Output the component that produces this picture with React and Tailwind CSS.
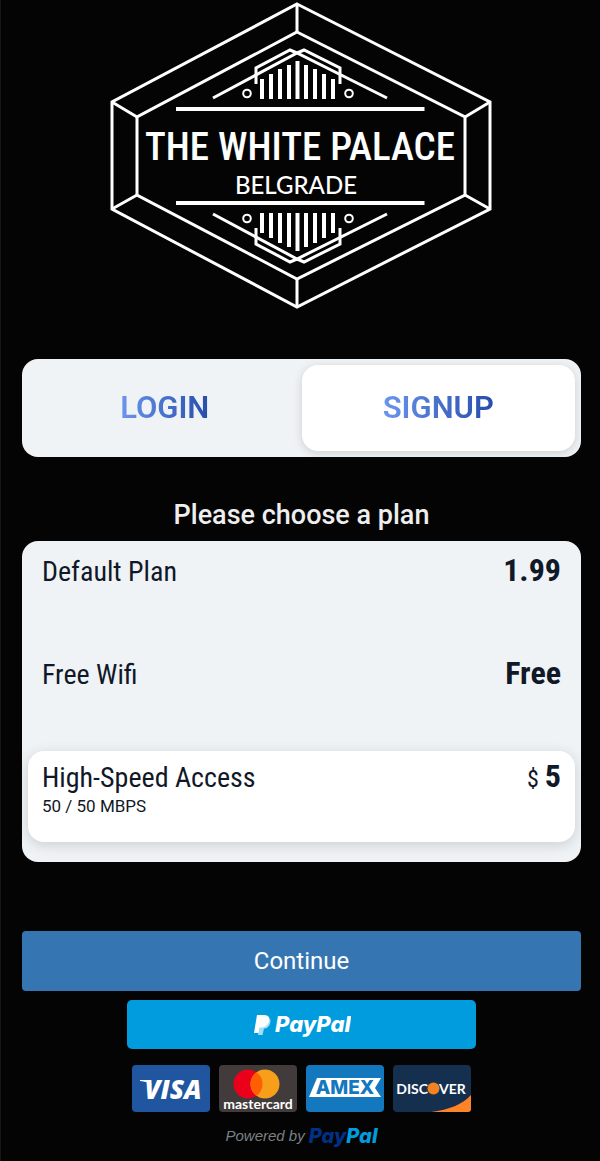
import React, { useState } from "react";

const plans = [
	{ id: "default", name: "Default Plan", price: "1.99" },
	{ id: "free", name: "Free Wifi", price: "Free" },
	{
		id: "high-speed",
		name: "High-Speed Access",
		speed: "50 / 50 MBPS",
		currency: "$",
		price: "5",
	},
];

// half of the crest ornament, mirrored for the bottom
function Ornament() {
	return (
		<>
			<path d="M176 109H424.500" strokeWidth="4" />
			<path d="M213 98L297 53L387 98" />
			<path d="M256 84V68L290 50L297 53M340 84V68L304 50L297 53" />
			<path d="M262 99V79M271 99V74M280 99V69M289 99V65M297.500 99V61M306 99V65M315 99V69M324 99V74M333 99V79" strokeWidth="4" />
			<circle cx="247" cy="93.500" r="3.800" strokeWidth="2" />
			<circle cx="349" cy="93.500" r="3.800" strokeWidth="2" />
		</>
	);
}

function Crest() {
	return (
		<svg
			viewBox="110 0 384 311"
			className="w-full max-w-[384px]"
			role="img"
			aria-label="The White Palace Belgrade"
		>
			<g fill="none" stroke="#fff" strokeWidth="3" strokeLinejoin="miter">
				<path d="M297 4L490 102V209L297 307L112 209V102Z" />
				<path d="M297 32L465 117V195L297 279L137 195V117Z" />
				<path d="M297 4V32M490 102L465 117M490 209L465 195M297 307V279M112 209L137 195M112 102L137 117" />
				<Ornament />
				<g transform="matrix(1 0 0 -1 0 312)">
					<Ornament />
				</g>
			</g>
			<g fill="#fff" textAnchor="middle">
				<text
					x="300"
					y="160"
					fontSize="39"
					className="font-['Roboto_Condensed','Liberation_Sans_Narrow',sans-serif] font-medium"
				>
					THE WHITE PALACE
				</text>
				<text x="296" y="194" fontSize="24" className="font-[Lato,sans-serif] font-medium">
					BELGRADE
				</text>
			</g>
		</svg>
	);
}

function Tab({ active, onClick, children }) {
	return (
		<button
			type="button"
			onClick={onClick}
			className={
				active
					? "flex-1 rounded-2xl bg-white shadow-[0_2px_10px_rgba(0,0,0,0.15)]"
					: "flex-1 rounded-2xl"
			}
		>
			<span className="bg-linear-to-r from-[#6b95ee] to-[#274dab] bg-clip-text text-[31px] font-semibold text-transparent">
				{children}
			</span>
		</button>
	);
}

function Plan({ plan, selected, onSelect }) {
	return (
		<label
			className={
				selected
					? "flex h-[91px] cursor-pointer justify-between rounded-2xl bg-white px-3.5 pt-[9px] shadow-[0_3px_14px_rgba(0,0,0,0.15)]"
					: "flex h-[91px] cursor-pointer justify-between rounded-2xl px-3.5 pt-[9px]"
			}
		>
			<input
				type="radio"
				name="plan"
				checked={selected}
				onChange={onSelect}
				className="sr-only"
			/>
			<span>
				<span className="block font-['Roboto_Condensed','Liberation_Sans_Narrow',sans-serif] text-[28px] leading-9">
					{plan.name}
				</span>
				{plan.speed && <span className="block text-[17px] leading-5">{plan.speed}</span>}
			</span>
			<span className="font-['Roboto_Condensed','Liberation_Sans_Narrow',sans-serif] text-[32px] leading-8 font-bold">
				{plan.currency && <span className="mr-1.5 text-2xl leading-8 font-normal">{plan.currency}</span>}
				{plan.price}
			</span>
		</label>
	);
}

function PayPalMark() {
	return (
		<svg viewBox="0 0 98 28" className="h-7 w-[98px]" role="img" aria-label="PayPal">
			<path d="M4 4H11C15.500 4 17.500 7 16.500 11C15.500 15 12.500 17 9 17H7L6 22H1Z" fill="#fff" />
			<path d="M16.800 7.500C18 9 17.500 12 16.500 14C15 17 12.500 17.500 11 17.500L9.500 24H5L6.500 16.500H9C13 16 16 13 16.800 7.500Z" fill="#a5ddf7" />
			<text x="22" y="21" fontSize="22" className="fill-white font-[Inter,sans-serif] font-extrabold italic">
				PayPal
			</text>
		</svg>
	);
}

function Visa() {
	return (
		<svg viewBox="0 0 78 47" className="w-[78px]" role="img" aria-label="Visa">
			<rect width="78" height="47" rx="4" fill="#20569f" />
			<path d="M8 15H17L20 20C17 17.500 13 16.500 8 16Z" fill="#fff" />
			<text x="41" y="34" fontSize="26" textAnchor="middle" className="fill-white font-['Open_Sans',sans-serif] font-extrabold italic">
				VISA
			</text>
		</svg>
	);
}

function Mastercard() {
	return (
		<svg viewBox="0 0 78 47" className="w-[78px]" role="img" aria-label="Mastercard">
			<rect width="78" height="47" rx="4" fill="#413b3b" />
			<circle cx="29" cy="19" r="14.500" fill="#eb001b" />
			<circle cx="46" cy="19" r="14.500" fill="#f79e1b" />
			<path d="M37.500 7.200A14.500 14.500 0 0 1 37.500 30.800A14.500 14.500 0 0 1 37.500 7.200Z" fill="#ff5f00" />
			<text x="39" y="44" fontSize="14" textAnchor="middle" className="fill-white font-[Lato,sans-serif] font-bold">
				mastercard
			</text>
		</svg>
	);
}

function Amex() {
	return (
		<svg viewBox="0 0 78 47" className="w-[78px]" role="img" aria-label="American Express">
			<rect width="78" height="47" rx="4" fill="#1478be" />
			<path d="M11 13H75L69 23L75 32H3Z" fill="#fff" />
			<text
				x="39"
				y="29"
				fontSize="19"
				textAnchor="middle"
				className="fill-[#1478be] font-[Inter,sans-serif] font-extrabold"
			>
				AMEX
			</text>
		</svg>
	);
}

function Discover() {
	return (
		<svg viewBox="0 0 78 47" className="w-[78px]" role="img" aria-label="Discover">
			<rect width="78" height="47" rx="4" fill="#15304f" />
			<path d="M38 47C56 45 70 39 78 30V44Q78 47 75 47Z" fill="#ff8427" />
			<circle cx="40.500" cy="23.500" r="6" fill="#f58220" />
			<g fontSize="14" className="fill-white font-[Lato,sans-serif] font-bold">
				<text x="35" y="29" textAnchor="end">DISC</text>
				<text x="46" y="29">VER</text>
			</g>
		</svg>
	);
}

function App() {
	const [tab, setTab] = useState("signup");
	const [planId, setPlanId] = useState("high-speed");

	return (
		<main className="flex min-h-screen flex-col border-l border-[#161616] bg-[#040404] pr-[19px] pl-[21px] font-[Roboto,sans-serif] text-[#111827]">
			<header className="flex justify-center">
				<Crest />
			</header>

			<nav className="mt-12 flex h-[98px] overflow-hidden rounded-2xl bg-[#eff3f6] p-1.5">
				<Tab active={tab === "login"} onClick={() => setTab("login")}>
					LOGIN
				</Tab>
				<Tab active={tab === "signup"} onClick={() => setTab("signup")}>
					SIGNUP
				</Tab>
			</nav>

			<h1 className="mt-10 text-center text-[27px] leading-9 font-medium text-[#eeeeee]">
				Please choose a plan
			</h1>

			<div className="mt-2 flex flex-col gap-3 overflow-hidden rounded-2xl bg-[#eff3f6] px-1.5 pt-1 pb-5">
				{plans.map((plan) => (
					<Plan
						key={plan.id}
						plan={plan}
						selected={plan.id === planId}
						onSelect={() => setPlanId(plan.id)}
					/>
				))}
			</div>

			<button type="button" className="mt-[69px] h-[60px] rounded-sm bg-[#3576b2] text-2xl text-white">
				Continue
			</button>

			<div className="flex flex-col items-center">
				<button
					type="button"
					className="mt-[9px] flex h-[49px] w-full max-w-[349px] items-center justify-center rounded-[5px] bg-[#009cde]"
				>
					<PayPalMark />
				</button>
				<div className="mt-4 flex gap-[9px]">
					<Visa />
					<Mastercard />
					<Amex />
					<Discover />
				</div>
				<p className="mt-2.5 flex items-center gap-1 text-[#7b8084]">
					<span className="font-['Liberation_Sans',sans-serif] text-[15px] leading-7 italic">Powered by</span>
					<span className="font-[Inter,sans-serif] text-xl leading-7 font-extrabold text-[#003087] italic">
						Pay<span className="text-[#009cde]">Pal</span>
					</span>
				</p>
			</div>
		</main>
	);
}

export default App;
